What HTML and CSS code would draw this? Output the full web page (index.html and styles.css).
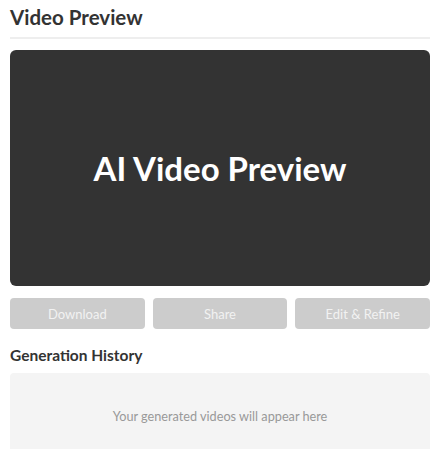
FILE: index.html
```html
<!DOCTYPE html>
<html lang="en">
<head>
  <meta charset="UTF-8" />
  <meta name="viewport" content="width=device-width, initial-scale=1.0"/>
  <title>Video Preview</title>
  <link rel="stylesheet" href="styles.css">
</head>
<body>
  <div class="panel">
    <h2 class="panel-title">Video Preview</h2>

    <div class="video-box">
      <span>AI Video Preview</span>
    </div>

    <div class="actions">
      <button disabled>Download</button>
      <button disabled>Share</button>
      <button disabled>Edit &amp; Refine</button>
    </div>

    <h3 class="history-title">Generation History</h3>
    <div class="history">
      <p>Your generated videos will appear here</p>
    </div>
  </div>
</body>
</html>
```

FILE: styles.css
```css
body {
  font-family: Lato, 'Segoe UI', sans-serif;
  background-color: #fff;
  color: #333;
  margin: 0;
}

.panel {
  padding: 4px 14px 0 10px;
}

.panel-title {
  font-size: 20.5px;
  line-height: 27px;
  font-weight: 700;
  margin: 0;
  padding-bottom: 6px;
  border-bottom: 2px solid #eee;
}

.video-box {
  margin-top: 11px;
  height: 236px;
  background: #333;
  border-radius: 6px;
  display: flex;
  align-items: center;
  justify-content: center;
}

.video-box span {
  font-weight: 700;
  font-size: 33px;
  color: #fff;
}

.actions {
  display: flex;
  gap: 8px;
  margin-top: 12px;
}

.actions button {
  flex: 1;
  height: 31px;
  background-color: #ccc;
  color: #f2f2f2;
  border: none;
  border-radius: 4px;
  font-family: inherit;
  font-size: 13px;
}

.history-title {
  font-size: 15.5px;
  line-height: 20px;
  font-weight: 700;
  margin: 16px 0 8px;
}

.history {
  background: #f4f4f4;
  border-radius: 4px;
  height: 90px;
  display: flex;
  justify-content: center;
  padding-top: 35px;
  box-sizing: border-box;
}

.history p {
  margin: 0;
  color: #999;
  font-size: 12.7px;
}
```
